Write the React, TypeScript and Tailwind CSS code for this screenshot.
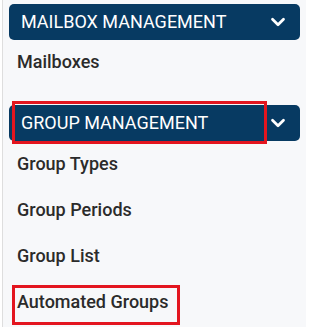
import { ChevronDown } from 'lucide-react';

const groupItems = ['Group Types', 'Group Periods', 'Group List'];

const SectionHeader = ({ title }: { title: string }) => {
  return (
    <div className="flex h-[36px] w-[291px] items-center justify-between rounded-[5px] bg-[#073a62] pl-[12px] pr-[11px] text-white">
      <span className="text-[18px] leading-none">{title}</span>
      <ChevronDown size={22} strokeWidth={3} />
    </div>
  );
};

const App = () => {
  return (
    <div
      className="flex h-[327px] w-[315px] bg-white"
      style={{ fontFamily: 'Roboto, "Noto Sans", sans-serif' }}
    >
      <div className="relative ml-[2px] flex h-full w-[304px] flex-col border-l border-[#dedede] bg-[#f7f8fa] pl-[6px]">
        <div className="mt-[4px]">
          <SectionHeader title="MAILBOX MANAGEMENT" />
        </div>
        <div className="mt-[12px] pl-[8px] text-[18px] font-medium leading-5 text-[#2b2b2b]">
          Mailboxes
        </div>

        <div className="relative mt-[33px]">
          <SectionHeader title="GROUP MANAGEMENT" />
          {/* annotation box */}
          <div className="absolute left-[3px] top-[-4px] h-[43px] w-[255px] border-[3px] border-[#e3151f]" />
        </div>

        <div className="mt-[13px] flex flex-col">
          {groupItems.map((item, i) => (
            <div
              key={i}
              className="h-[46px] pl-[8px] text-[18px] font-medium leading-5 text-[#2b2b2b]"
            >
              {item}
            </div>
          ))}
          <div className="relative pl-[8px] text-[18px] font-medium leading-5 text-[#2b2b2b]">
            Automated Groups
            <div className="absolute left-[3px] top-[-7px] h-[40px] w-[168px] border-[3px] border-[#e3151f]" />
          </div>
        </div>
      </div>
    </div>
  );
};

export default App;
